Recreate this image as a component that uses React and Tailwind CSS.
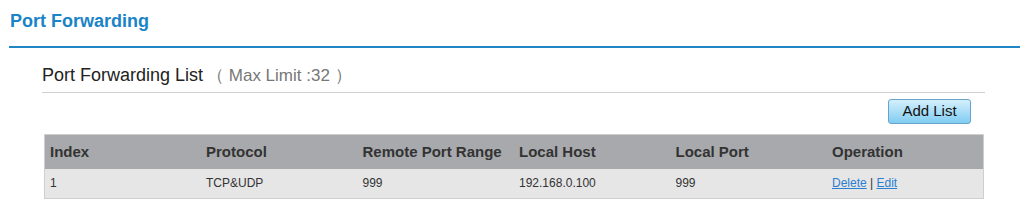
const rows = [
  { index: "1", protocol: "TCP&UDP", remote: "999", host: "192.168.0.100", port: "999" },
]

const heads = ["Index", "Protocol", "Remote Port Range", "Local Host", "Local Port", "Operation"]

export default function App() {
  return (
    <div className="w-[1032px] h-[215px] bg-white font-['Liberation_Sans',Arial,sans-serif] overflow-hidden">
      <div className="pl-[1px] pt-[11px] h-[48px] border-b-2 border-[#1f87c6] ml-[9px] mr-[12px]">
        <h1 className="text-[18px] font-bold text-[#1a84c7] leading-[20px]">Port Forwarding</h1>
      </div>
      <div className="pl-[42px] pr-[47px]">
        <div className="flex items-baseline h-[45px] pt-[14px] border-b border-[#d0d0d0]">
          <span className="text-[18px] text-[#222]">Port Forwarding List</span>
          <span className="ml-[4px] text-[17px] text-[#777]">（ Max Limit :32 ）</span>
        </div>
        <div className="flex justify-end pt-[6px] pr-[14px]">
          <button className="w-[83px] h-[25px] rounded-[3px] border border-[#6aa3c9] bg-gradient-to-b from-[#d3effc] to-[#7fcdf2] text-[15px] text-[#111]">
            Add List
          </button>
        </div>
        <table className="mt-[10px] ml-[2px] w-[940px] border border-[#cfcfcf] border-collapse table-fixed">
          <thead>
            <tr className="bg-[#a7a9ac] h-[34px]">
              {heads.map((h) => (
                <th key={h} className="text-left pl-[5px] text-[15px] font-bold text-[#333]">{h}</th>
              ))}
            </tr>
          </thead>
          <tbody>
            {rows.map((r) => (
              <tr key={r.index} className="bg-[#e6e6e6] h-[30px] text-[12px] text-[#333]">
                <td className="pl-[5px]">{r.index}</td>
                <td className="pl-[5px]">{r.protocol}</td>
                <td className="pl-[5px]">{r.remote}</td>
                <td className="pl-[5px]">{r.host}</td>
                <td className="pl-[5px]">{r.port}</td>
                <td className="pl-[5px]">
                  <a className="text-[#2a7fd0] underline cursor-pointer">Delete</a>
                  <span> | </span>
                  <a className="text-[#2a7fd0] underline cursor-pointer">Edit</a>
                </td>
              </tr>
            ))}
          </tbody>
        </table>
      </div>
    </div>
  )
}
